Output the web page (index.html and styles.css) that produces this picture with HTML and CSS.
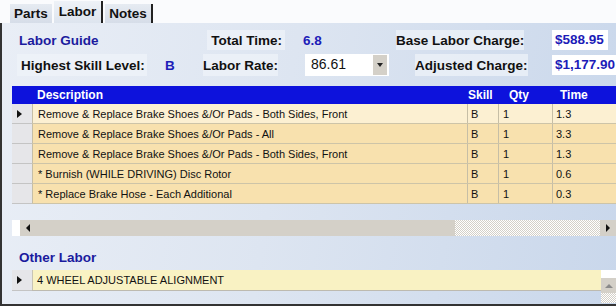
FILE: index.html
```html
<!DOCTYPE html>
<html lang="en">
<head>
    <meta charset="UTF-8">
    <title>Labor</title>
    <link rel="stylesheet" href="styles.css">
</head>
<body>
    <div class="tabs">
        <div class="tab">Parts</div>
        <div class="tab active">Labor</div>
        <div class="tab edge">Notes</div>
    </div>

    <div class="panel">
        <div class="info">
            <div class="cell c1 title">Labor Guide</div>
            <div class="cell c3 lbl total">Total Time:</div>
            <div class="cell c4 val time">6.8</div>
            <div class="cell c5 lbl base">Base Labor Charge:</div>
            <div class="cell c6"><span class="money short">$588.95</span></div>

            <div class="cell c1 lbl skill">Highest Skill Level:</div>
            <div class="cell c2 val skillval">B</div>
            <div class="cell c3 lbl rate">Labor Rate:</div>
            <div class="cell c4">
                <div class="combo">
                    <span class="combo-text">86.61</span>
                    <span class="combo-btn"><i class="down"></i></span>
                </div>
            </div>
            <div class="cell c5 lbl adj">Adjusted Charge:</div>
            <div class="cell c6"><span class="money">$1,177.90</span></div>
        </div>

        <div class="grid">
            <div class="grow head">
                <div class="rh"></div>
                <div class="gc desc">Description</div>
                <div class="gc skill-h">Skill</div>
                <div class="gc qty-h">Qty</div>
                <div class="gc time-h">Time</div>
            </div>
            <div class="grow first">
                <div class="rh"><i class="arrow"></i></div>
                <div class="gc desc">Remove &amp; Replace Brake Shoes &amp;/Or Pads - Both Sides, Front</div>
                <div class="gc sk">B</div>
                <div class="gc qt">1</div>
                <div class="gc tm">1.3</div>
            </div>
            <div class="grow">
                <div class="rh"></div>
                <div class="gc desc">Remove &amp; Replace Brake Shoes &amp;/Or Pads - All</div>
                <div class="gc sk">B</div>
                <div class="gc qt">1</div>
                <div class="gc tm">3.3</div>
            </div>
            <div class="grow">
                <div class="rh"></div>
                <div class="gc desc">Remove &amp; Replace Brake Shoes &amp;/Or Pads - Both Sides, Front</div>
                <div class="gc sk">B</div>
                <div class="gc qt">1</div>
                <div class="gc tm">1.3</div>
            </div>
            <div class="grow">
                <div class="rh"></div>
                <div class="gc desc">* Burnish (WHILE DRIVING) Disc Rotor</div>
                <div class="gc sk">B</div>
                <div class="gc qt">1</div>
                <div class="gc tm">0.6</div>
            </div>
            <div class="grow">
                <div class="rh"></div>
                <div class="gc desc">* Replace Brake Hose - Each Additional</div>
                <div class="gc sk">B</div>
                <div class="gc qt">1</div>
                <div class="gc tm">0.3</div>
            </div>
        </div>

        <div class="hscroll">
            <div class="hs-white"></div>
            <div class="hs-btn"><i class="left"></i></div>
            <div class="hs-thumb"></div>
            <div class="hs-track"></div>
            <div class="hs-btn"><i class="right"></i></div>
        </div>

        <div class="other-title">Other Labor</div>

        <div class="other">
            <div class="other-rows">
                <div class="orow">
                    <div class="rh"><i class="arrow"></i></div>
                    <div class="ocell">4 WHEEL ADJUSTABLE ALIGNMENT</div>
                </div>
            </div>
            <div class="vscroll">
                <div class="vs-white"></div>
                <div class="vs-btn"><i class="up"></i></div>
                <div class="vs-track"></div>
            </div>
        </div>
    </div>
</body>
</html>
```

FILE: styles.css
```css
body {
    margin: 0;
    width: 616px;
    height: 306px;
    overflow: hidden;
    background: #fafbfd;
    font-family: "Liberation Sans", Arial, sans-serif;
    color: #111;
}

.tabs {
    display: flex;
    align-items: flex-end;
    height: 23px;
    padding-left: 10px;
    gap: 2px;
}

.tab {
    height: 19px;
    line-height: 20px;
    padding: 0 4px;
    background: linear-gradient(#e6ebf2, #d6dde8);
    font-size: 13.5px;
    font-weight: bold;
}

.tab.active {
    height: 22px;
    line-height: 21px;
    padding: 0 5px 0 5px;
    background: linear-gradient(#eef2f7, #dde4ee);
    border-right: 2px solid #222;
}

.tab.edge {
    border-right: 2px solid #222;
}

.panel {
    box-sizing: border-box;
    height: 283px;
    padding-left: 10px;
    border-left: 2px solid #333;
    border-bottom: 2px solid #333;
    background: linear-gradient(100deg, #e9eef6 0%, #dde5f1 45%, #c9d7eb 100%);
}

/* top summary */
.info {
    display: grid;
    grid-template-columns: 136px 52px 100px 92px 158px 1fr;
    grid-template-rows: 20px 22px;
    row-gap: 4px;
    padding-top: 7px;
    font-size: 13.5px;
    font-weight: bold;
}

.cell {
    display: flex;
    align-items: center;
}

.c1 { grid-column: 1; }
.c2 { grid-column: 2; }
.c3 { grid-column: 3; }
.c4 { grid-column: 4; }
.c5 { grid-column: 5; }
.c6 { grid-column: 6; }

.title {
    padding-left: 7px;
    color: #1b1b9e;
}

.lbl {
    background: rgba(240, 244, 250, 0.7);
    white-space: nowrap;
}

.total {
    justify-self: end;
    margin-right: 15px;
    padding: 0 3px 0 4px;
}

.skill {
    margin-left: 5px;
    padding-left: 4px;
    width: 126px;
}

.rate {
    justify-self: start;
    margin-left: 3px;
}

.base {
    justify-self: start;
    margin-left: 4px;
}

.adj {
    justify-self: start;
    margin-left: 23px;
}

.val {
    color: #1c1cb8;
}

.time {
    padding-left: 3px;
}

.skillval {
    padding-left: 17px;
}

.money {
    display: block;
    box-sizing: border-box;
    height: 20px;
    line-height: 20px;
    margin-left: 2px;
    padding-left: 3px;
    background: #fff;
    color: #1c1cb8;
    white-space: nowrap;
    overflow: hidden;
    width: 70px;
}

.money.short {
    width: 56px;
}

.combo {
    display: flex;
    height: 22px;
    margin-left: 5px;
    background: #fff;
}

.combo-text {
    width: 62px;
    padding-left: 6px;
    line-height: 20px;
    font-weight: normal;
    font-size: 14px;
    color: #111;
}

.combo-btn {
    width: 14px;
    margin: 1px 2px 1px 0;
    background: #d4d0c8;
    display: flex;
    align-items: center;
    justify-content: center;
}

.down {
    border-top: 4px solid #222;
    border-left: 3px solid transparent;
    border-right: 3px solid transparent;
}

/* labor grid */
.grid {
    margin-top: 10px;
    font-size: 11px;
}

.grow {
    display: grid;
    grid-template-columns: 20px 435px 31px 54px 1fr;
    height: 20px;
    background: #f8e1ae;
    border-bottom: 1px solid #cdc4a8;
    box-sizing: border-box;
}

.grow.first {
    background: #fcf0d2;
}

.grow.head {
    height: 18px;
    background: #0d12dc;
    color: #fff;
    font-weight: bold;
    font-size: 12px;
    border-bottom: none;
}

.gc {
    display: flex;
    align-items: center;
    white-space: nowrap;
    overflow: hidden;
    border-left: 1px solid #c6bea6;
}

.head .gc {
    border-left: none;
}

.desc { padding-left: 5px; }
.skill-h { padding-left: 1px; }
.qty-h { padding-left: 11px; }
.time-h { padding-left: 8px; }
.sk { padding-left: 3px; }
.qt { padding-left: 4px; }
.tm { padding-left: 3px; }

.rh {
    display: flex;
    align-items: center;
    padding-left: 5px;
    background: #e6e6e9;
    border-bottom: 1px solid #c4c4c4;
    margin-bottom: -1px;
}

.head .rh {
    background: #0d12dc;
    border-bottom: none;
}

.arrow {
    border-left: 5px solid #111;
    border-top: 4px solid transparent;
    border-bottom: 4px solid transparent;
}

/* scrollbars */
.hscroll {
    display: flex;
    height: 16px;
    margin-top: 16px;
}

.hs-white {
    width: 8px;
    background: #fff;
}

.hs-btn {
    width: 16px;
    background: #d4d0c8;
    display: flex;
    align-items: center;
    justify-content: center;
}

.hs-thumb {
    width: 419px;
    background: #d4d0c8;
}

.hs-track,
.vs-track {
    flex: 1;
    background: repeating-conic-gradient(#d4d0c8 0 25%, #fff 0 50%) 0 0 / 2px 2px;
}

.left {
    border-right: 4px solid #111;
    border-top: 4px solid transparent;
    border-bottom: 4px solid transparent;
}

.right {
    border-left: 4px solid #111;
    border-top: 4px solid transparent;
    border-bottom: 4px solid transparent;
}

.other-title {
    margin: 14px 0 4px 7px;
    height: 16px;
    line-height: 16px;
    font-size: 13.5px;
    font-weight: bold;
    color: #1b1b9e;
}

.other {
    display: flex;
    height: 33px;
}

.other-rows {
    flex: 1;
}

.orow {
    display: grid;
    grid-template-columns: 20px 1fr;
    height: 21px;
    box-sizing: border-box;
    background: #f9f2c3;
    border-bottom: 1px solid #bdbab0;
    font-size: 11px;
}

.ocell {
    display: flex;
    align-items: center;
    padding-left: 4px;
    border-left: 1px solid #c8c4b4;
}

.vscroll {
    width: 15px;
    display: flex;
    flex-direction: column;
}

.vs-white {
    height: 8px;
    background: #fff;
}

.vs-btn {
    height: 15px;
    background: #d4d0c8;
    display: flex;
    align-items: center;
    justify-content: center;
}

.up {
    border-bottom: 4px solid #8a8a8a;
    border-left: 4px solid transparent;
    border-right: 4px solid transparent;
}
```
